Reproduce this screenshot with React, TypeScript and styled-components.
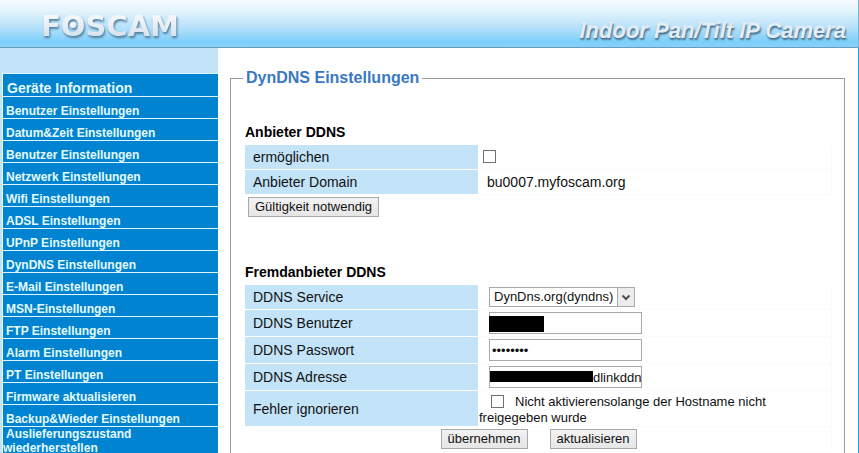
import React, { useState } from "react";
import styled, { createGlobalStyle } from "styled-components";

const GlobalStyle = createGlobalStyle`
  *, *::before, *::after { box-sizing: border-box; }
  body {
    margin: 0;
    background: #fff;
    color: #111;
    font-family: "Liberation Sans", Arial, sans-serif;
    font-size: 14px;
  }
`;

const Shell = styled.div`
  display: flex;
  flex-direction: column;
  height: 100vh;
  overflow: hidden;
`;

const Header = styled.header`
  display: flex;
  flex: none;
  justify-content: space-between;
  align-items: flex-end;
  height: 48px;
  padding: 0 12px 0 40px;
  background: linear-gradient(#f6fbfd 0%, #e2f3fc 25%, #b4e0fa 60%, #80cffa 88%, #84d0fa 100%);
  border-bottom: 1px solid #6c9db8;
  border-right: 1px solid #6fb4dc;
`;

const Logo = styled.svg`
  display: block;
  margin-bottom: 5px;
  filter: drop-shadow(1px 2px 1px #4f7f9d);
`;

const LogoText = styled.text`
  font: bold 29px "DejaVu Sans", sans-serif;
`;

const Tagline = styled.div`
  margin-bottom: 4px;
  color: #e3edf6;
  font-size: 22px;
  font-weight: bold;
  font-style: italic;
  line-height: 24px;
  text-shadow: 1px 2px 2px #3f6f8f, 0 1px 1px #6b95b0;
  -webkit-text-stroke: 1px #e3edf6;
  paint-order: stroke;
  white-space: nowrap;
`;

const Body = styled.div`
  display: flex;
  flex: 1;
  min-height: 0;
  border-right: 1px solid #22a3e2;
`;

const Sidebar = styled.nav`
  flex: none;
  width: 218px;
  padding: 25px 0 0 2px;
  background: #c3e4f8;
`;

const Menu = styled.ul`
  margin: 0;
  padding: 0;
  list-style: none;
  border-left: 1px solid #eefaff;
`;

const MenuItem = styled.li<{ $lead?: boolean; $wrap?: boolean }>`
  display: flex;
  align-items: flex-end;
  height: ${(p) => (p.$wrap ? "36px" : p.$lead ? "23px" : "22px")};
  padding-left: ${(p) => (p.$wrap ? "0" : p.$lead ? "4px" : "3px")};
  background: #0084d1;
  border-top: 1px solid #dff8ff;
  font-size: ${(p) => (p.$lead ? "14px" : "12px")};
  line-height: ${(p) => (p.$lead ? "15px" : "14px")};
`;

const MenuLink = styled.a<{ $wrap?: boolean }>`
  width: ${(p) => (p.$wrap ? "140px" : "auto")};
  align-self: ${(p) => (p.$wrap ? "flex-start" : "auto")};
  text-indent: ${(p) => (p.$wrap ? "3px" : "0")};
  color: #e4faff;
  font-weight: bold;
  text-decoration: none;
`;

const Main = styled.main`
  flex: 1;
  min-width: 0;
  padding: 20px 13px 0 12px;
`;

const Panel = styled.fieldset`
  min-width: 0;
  margin: 0;
  padding: 0 12px 20px 14px;
  border: 1px solid #9a9a9a;
`;

const PanelTitle = styled.legend`
  margin-left: -2px;
  padding: 0 3px;
  color: #3a78c3;
  font-size: 16px;
  font-weight: bold;
  line-height: 20px;
`;

const Section = styled.section<{ $gap: number }>`
  padding-top: ${(p) => p.$gap}px;
`;

const SectionTitle = styled.h2`
  margin: 0 0 4px;
  color: #000;
  font-size: 14px;
  font-weight: bold;
  line-height: 18px;
`;

const Form = styled.table`
  width: 100%;
  border-spacing: 0;
  table-layout: fixed;
`;

const LabelColumn = styled.col`
  width: 233px;
`;

const Row = styled.tr<{ $h: number }>`
  height: ${(p) => p.$h}px;
`;

const LabelCell = styled.th`
  padding: 0 8px;
  background: #c3e4f8;
  background-clip: padding-box;
  border-bottom: 1px solid #fff;
  font-size: 14px;
  font-weight: normal;
  text-align: left;
`;

const Cell = styled.td<{ $inset?: number }>`
  padding: 0 0 0 ${(p) => p.$inset ?? 1}px;
  border: solid #fafafa;
  border-width: 0 1px 1px 0;
`;

const Actions = styled.div`
  display: flex;
  justify-content: center;
  gap: 22px;
`;

const StartActions = styled.div`
  display: flex;
  padding: 2px 3px;
`;

const Button = styled.button`
  height: 20px;
  padding: 0 6px;
  background: linear-gradient(#f2f2f2, #e6e6e6);
  border: 1px solid #a9a9a9;
  border-radius: 0;
  color: #111;
  font: 13px/16px "Liberation Sans", Arial, sans-serif;
`;

const Check = styled.input`
  appearance: none;
  display: inline-block;
  width: 13px;
  height: 13px;
  margin: 0 0 2px 4px;
  background: #fff;
  border: 1px solid #707070;
  vertical-align: middle;
  &:checked { background: #4a78b0; }
`;

const Note = styled.div`
  max-width: 300px;
  padding-top: 3px;
  font-size: 13px;
  line-height: 16px;
  ${Check} { margin: 0 11px 2px 12px; }
`;

const Field = styled.div`
  position: relative;
  display: block;
  width: fit-content;
`;

const TextInput = styled.input<{ $lead?: number }>`
  display: block;
  width: 153px;
  height: 22px;
  padding: 0 0 0 ${(p) => p.$lead ?? 2}px;
  background: #fff;
  border: 1px solid #a9a9a9;
  border-radius: 0;
  color: #111;
  font: 13px/16px "Liberation Sans", Arial, sans-serif;
`;

const Mask = styled.span<{ $x: number; $y: number; $w: number; $h: number }>`
  position: absolute;
  left: ${(p) => p.$x}px;
  top: ${(p) => p.$y}px;
  width: ${(p) => p.$w}px;
  height: ${(p) => p.$h}px;
  background: #000;
`;

const Select = styled.select`
  appearance: none;
  display: block;
  width: 146px;
  height: 20px;
  padding: 0 18px 0 4px;
  background: #fff;
  border: 1px solid #a9a9a9;
  border-radius: 0;
  color: #111;
  font: 13px/16px "Liberation Sans", Arial, sans-serif;
`;

const SelectArrow = styled.svg`
  position: absolute;
  top: 0;
  right: 0;
  pointer-events: none;
`;

const menuItems = [
  "Benutzer Einstellungen",
  "Datum&Zeit Einstellungen",
  "Benutzer Einstellungen",
  "Netzwerk Einstellungen",
  "Wifi Einstellungen",
  "ADSL Einstellungen",
  "UPnP Einstellungen",
  "DynDNS Einstellungen",
  "E-Mail Einstellungen",
  "MSN-Einstellungen",
  "FTP Einstellungen",
  "Alarm Einstellungen",
  "PT Einstellungen",
  "Firmware aktualisieren",
  "Backup&Wieder Einstellungen",
];

function FoscamLogo() {
  return (
    <Logo width="150" height="32" viewBox="0 0 150 32" role="img" aria-label="FOSCAM">
      <defs>
        <linearGradient id="metal" x1="0" y1="0" x2="0" y2="1">
          <stop offset="0" stopColor="#ffffff" />
          <stop offset="1" stopColor="#cddbe8" />
        </linearGradient>
      </defs>
      <LogoText x="1" y="26" fill="url(#metal)">FOSCAM</LogoText>
      <circle cx="33" cy="15" r="3" fill="#f2f7fb" />
    </Logo>
  );
}

export default function App() {
  const [enabled, setEnabled] = useState(false);
  const [ignore, setIgnore] = useState(false);

  return (
    <>
      <GlobalStyle />
      <Shell>
        <Header>
          <FoscamLogo />
          <Tagline>Indoor Pan/Tilt IP Camera</Tagline>
        </Header>
        <Body>
          <Sidebar>
            <Menu>
              <MenuItem $lead><MenuLink href="#info">Geräte Information</MenuLink></MenuItem>
              {menuItems.map((label, i) => (
                <MenuItem key={i}><MenuLink href={`#menu-${i}`}>{label}</MenuLink></MenuItem>
              ))}
              <MenuItem $wrap>
                <MenuLink $wrap href="#reset">Auslieferungszustand wiederherstellen</MenuLink>
              </MenuItem>
            </Menu>
          </Sidebar>
          <Main>
            <Panel>
              <PanelTitle>DynDNS Einstellungen</PanelTitle>
              <Section $gap={35}>
                <SectionTitle>Anbieter DDNS</SectionTitle>
                <Form>
                  <colgroup><LabelColumn /><col /></colgroup>
                  <tbody>
                    <Row $h={25}>
                      <LabelCell scope="row"><label htmlFor="enable">ermöglichen</label></LabelCell>
                      <Cell>
                        <Check id="enable" type="checkbox" checked={enabled} onChange={(e) => setEnabled(e.target.checked)} />
                      </Cell>
                    </Row>
                    <Row $h={25}>
                      <LabelCell scope="row">Anbieter Domain</LabelCell>
                      <Cell $inset={9}>bu0007.myfoscam.org</Cell>
                    </Row>
                  </tbody>
                </Form>
                <StartActions><Button type="button">Gültigkeit notwendig</Button></StartActions>
              </Section>
              <Section $gap={44}>
                <SectionTitle>Fremdanbieter DDNS</SectionTitle>
                <Form>
                  <colgroup><LabelColumn /><col /></colgroup>
                  <tbody>
                    <Row $h={25}>
                      <LabelCell scope="row"><label htmlFor="service">DDNS Service</label></LabelCell>
                      <Cell $inset={11}>
                        <Field>
                          <Select id="service" defaultValue="dyndns">
                            <option value="dyndns">DynDns.org(dyndns)</option>
                          </Select>
                          <SelectArrow width="18" height="20" viewBox="0 0 18 20">
                            <rect x="0.5" y="0.5" width="17" height="19" fill="#ececec" stroke="#a9a9a9" />
                            <path d="M5.5 8.5 L9 12 L12.5 8.5" fill="none" stroke="#505050" strokeWidth="2" />
                          </SelectArrow>
                        </Field>
                      </Cell>
                    </Row>
                    <Row $h={27}>
                      <LabelCell scope="row"><label htmlFor="user">DDNS Benutzer</label></LabelCell>
                      <Cell $inset={11}>
                        <Field>
                          <TextInput id="user" type="text" />
                          <Mask $x={0} $y={4} $w={55} $h={16} />
                        </Field>
                      </Cell>
                    </Row>
                    <Row $h={27}>
                      <LabelCell scope="row"><label htmlFor="pass">DDNS Passwort</label></LabelCell>
                      <Cell $inset={11}>
                        <TextInput id="pass" type="password" defaultValue="password" />
                      </Cell>
                    </Row>
                    <Row $h={27}>
                      <LabelCell scope="row"><label htmlFor="address">DDNS Adresse</label></LabelCell>
                      <Cell $inset={11}>
                        <Field>
                          <TextInput id="address" type="text" $lead={103} defaultValue="dlinkddn" />
                          <Mask $x={1} $y={5} $w={103} $h={11} />
                        </Field>
                      </Cell>
                    </Row>
                    <Row $h={36}>
                      <LabelCell scope="row"><label htmlFor="ignore">Fehler ignorieren</label></LabelCell>
                      <Cell>
                        <Note>
                          <Check id="ignore" type="checkbox" checked={ignore} onChange={(e) => setIgnore(e.target.checked)} />
                          Nicht aktivierensolange der Hostname nicht freigegeben wurde
                        </Note>
                      </Cell>
                    </Row>
                    <Row $h={25}>
                      <Cell colSpan={2}>
                        <Actions>
                          <Button type="button">übernehmen</Button>
                          <Button type="button">aktualisieren</Button>
                        </Actions>
                      </Cell>
                    </Row>
                  </tbody>
                </Form>
              </Section>
            </Panel>
          </Main>
        </Body>
      </Shell>
    </>
  );
}
